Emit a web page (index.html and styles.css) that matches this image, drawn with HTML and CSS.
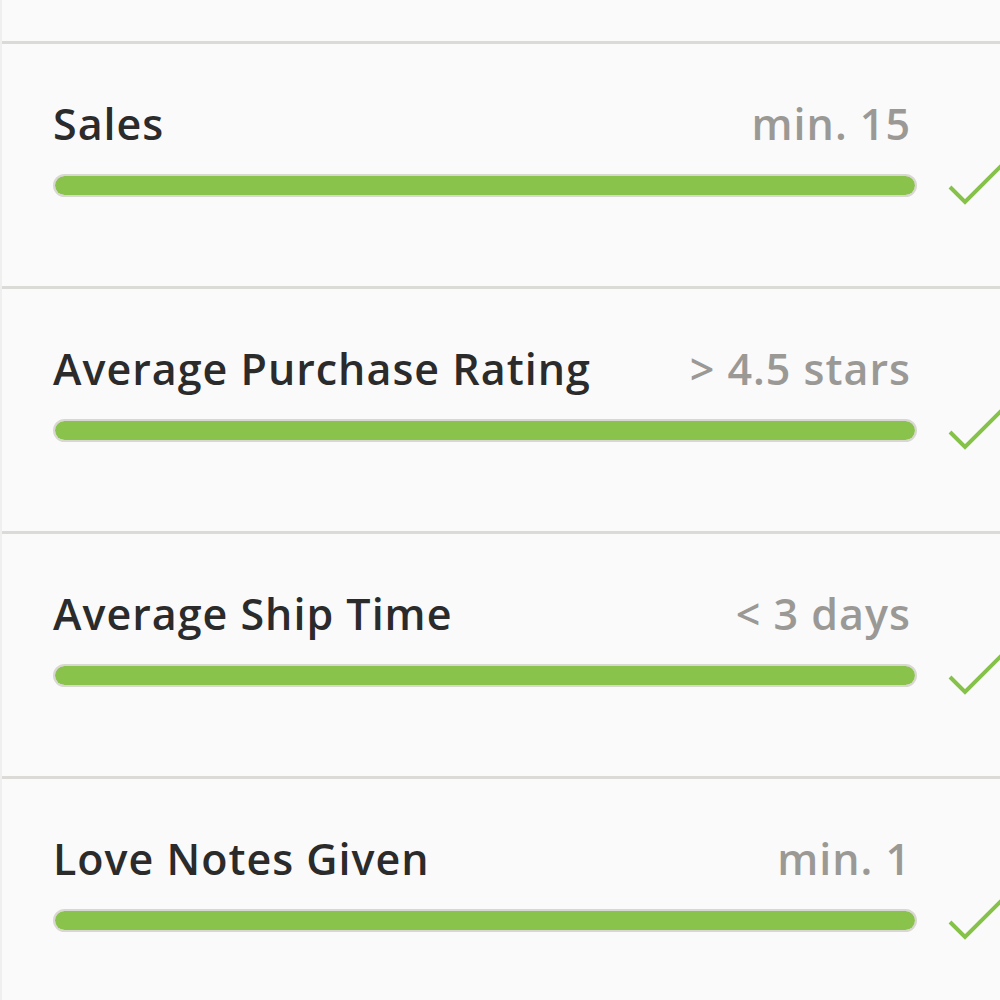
FILE: index.html
```html
<!DOCTYPE html>
<html lang="en">

<head>
  <meta charset="UTF-8">
  <meta name="viewport" content="width=device-width, initial-scale=1.0">
  <title>Seller Goals</title>
  <link rel="stylesheet" href="styles.css">
</head>

<body>

  <div class="goals">
    <div class="goal">
      <div class="goal-head">
        <span class="goal-name">Sales</span>
        <span class="goal-target">min. 15</span>
      </div>
      <div class="goal-row">
        <div class="bar"><div class="bar-fill" style="width:100%"></div></div>
        <svg class="check" width="60" height="50" viewBox="0 0 60 50"><path d="M3 27 L18 42 L60 0" /></svg>
      </div>
    </div>

    <div class="goal">
      <div class="goal-head">
        <span class="goal-name">Average Purchase Rating</span>
        <span class="goal-target">&gt; 4.5 stars</span>
      </div>
      <div class="goal-row">
        <div class="bar"><div class="bar-fill" style="width:100%"></div></div>
        <svg class="check" width="60" height="50" viewBox="0 0 60 50"><path d="M3 27 L18 42 L60 0" /></svg>
      </div>
    </div>

    <div class="goal">
      <div class="goal-head">
        <span class="goal-name">Average Ship Time</span>
        <span class="goal-target">&lt; 3 days</span>
      </div>
      <div class="goal-row">
        <div class="bar"><div class="bar-fill" style="width:100%"></div></div>
        <svg class="check" width="60" height="50" viewBox="0 0 60 50"><path d="M3 27 L18 42 L60 0" /></svg>
      </div>
    </div>

    <div class="goal">
      <div class="goal-head">
        <span class="goal-name">Love Notes Given</span>
        <span class="goal-target">min. 1</span>
      </div>
      <div class="goal-row">
        <div class="bar"><div class="bar-fill" style="width:100%"></div></div>
        <svg class="check" width="60" height="50" viewBox="0 0 60 50"><path d="M3 27 L18 42 L60 0" /></svg>
      </div>
    </div>
  </div>

</body>

</html>
```

FILE: styles.css
```css
body {
  margin: 0;
  background-color: #fafafa;
  font-family: "Open Sans", sans-serif;
  overflow: hidden;
}

.goals {
  width: 1040px;
  height: 1000px;
  padding-top: 41px;
  border-left: 2px solid #efefef;
  box-sizing: border-box;
}

.goal {
  height: 245px;
  box-sizing: border-box;
  border-top: 3px solid #dcdad6;
  padding: 54px 0 0 51px;
}

.goal-head {
  width: 858px;
  display: flex;
  justify-content: space-between;
  align-items: baseline;
  line-height: 52px;
}

.goal-name {
  font-size: 43px;
  font-weight: 600;
  letter-spacing: 1px;
  color: #2b2b2b;
}

.goal-target {
  font-size: 43px;
  font-weight: 600;
  letter-spacing: 1px;
  color: #9b9995;
}

.goal-row {
  display: flex;
  align-items: center;
  margin-top: 10px;
}

.bar {
  width: 860px;
  height: 19px;
  border: 2px solid #d9d7d1;
  border-radius: 12px;
  background-color: #d9d7d1;
  overflow: hidden;
}

.bar-fill {
  height: 100%;
  border-radius: 10px;
  background-color: #89c34b;
}

.check {
  margin-left: 30px;
  overflow: visible;
}

.check path {
  fill: none;
  stroke: #86c24a;
  stroke-width: 4;
}
```
